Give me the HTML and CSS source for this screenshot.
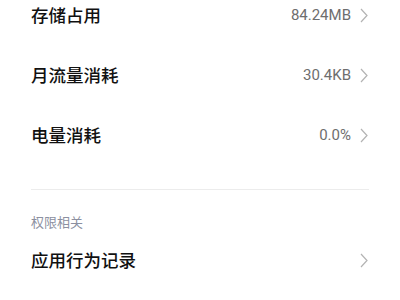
FILE: index.html
```html
<!DOCTYPE html>
<html lang="zh-CN">
<head>
<meta charset="utf-8">
<link rel="stylesheet" href="styles.css">
</head>
<body>
<div class="page">
  <div class="row">
    <span class="title">存储占用</span>
    <span class="value">84.24MB</span>
    <svg class="chev" width="8" height="15" viewBox="0 0 8 15"><polyline points="1,1 7,7.5 1,14" fill="none" stroke="#b3b3b3" stroke-width="1.2"/></svg>
  </div>
  <div class="row">
    <span class="title">月流量消耗</span>
    <span class="value">30.4KB</span>
    <svg class="chev" width="8" height="15" viewBox="0 0 8 15"><polyline points="1,1 7,7.5 1,14" fill="none" stroke="#b3b3b3" stroke-width="1.2"/></svg>
  </div>
  <div class="row">
    <span class="title">电量消耗</span>
    <span class="value">0.0%</span>
    <svg class="chev" width="8" height="15" viewBox="0 0 8 15"><polyline points="1,1 7,7.5 1,14" fill="none" stroke="#b3b3b3" stroke-width="1.2"/></svg>
  </div>
  <div class="divider"></div>
  <div class="header">权限相关</div>
  <div class="row">
    <span class="title">应用行为记录</span>
    <svg class="chev" width="8" height="15" viewBox="0 0 8 15"><polyline points="1,1 7,7.5 1,14" fill="none" stroke="#b3b3b3" stroke-width="1.2"/></svg>
  </div>
</div>
</body>
</html>
```
FILE: styles.css
```css
html, body {
  margin: 0;
  padding: 0;
  background: #ffffff;
  overflow: hidden;
}
.page {
  margin-top: -15px;
  padding: 0 31px;
  font-family: "Noto Sans CJK SC", "Noto Sans", sans-serif;
}
.row {
  height: 60px;
  display: flex;
  align-items: center;
}
.title {
  flex: 1;
  font-size: 17.5px;
  font-weight: 500;
  color: #111111;
  line-height: 1;
}
.value {
  font-family: Roboto, "Noto Sans", sans-serif;
  font-size: 15px;
  color: #6e6e6e;
  margin-right: 9px;
  line-height: 1;
}
.chev {
  display: block;
  margin-right: 1px;
}
.divider {
  margin-top: 24px;
  height: 1px;
  background: #ececec;
}
.header {
  padding-top: 24px;
  font-size: 13px;
  line-height: 16px;
  color: #8c90a0;
}
```
